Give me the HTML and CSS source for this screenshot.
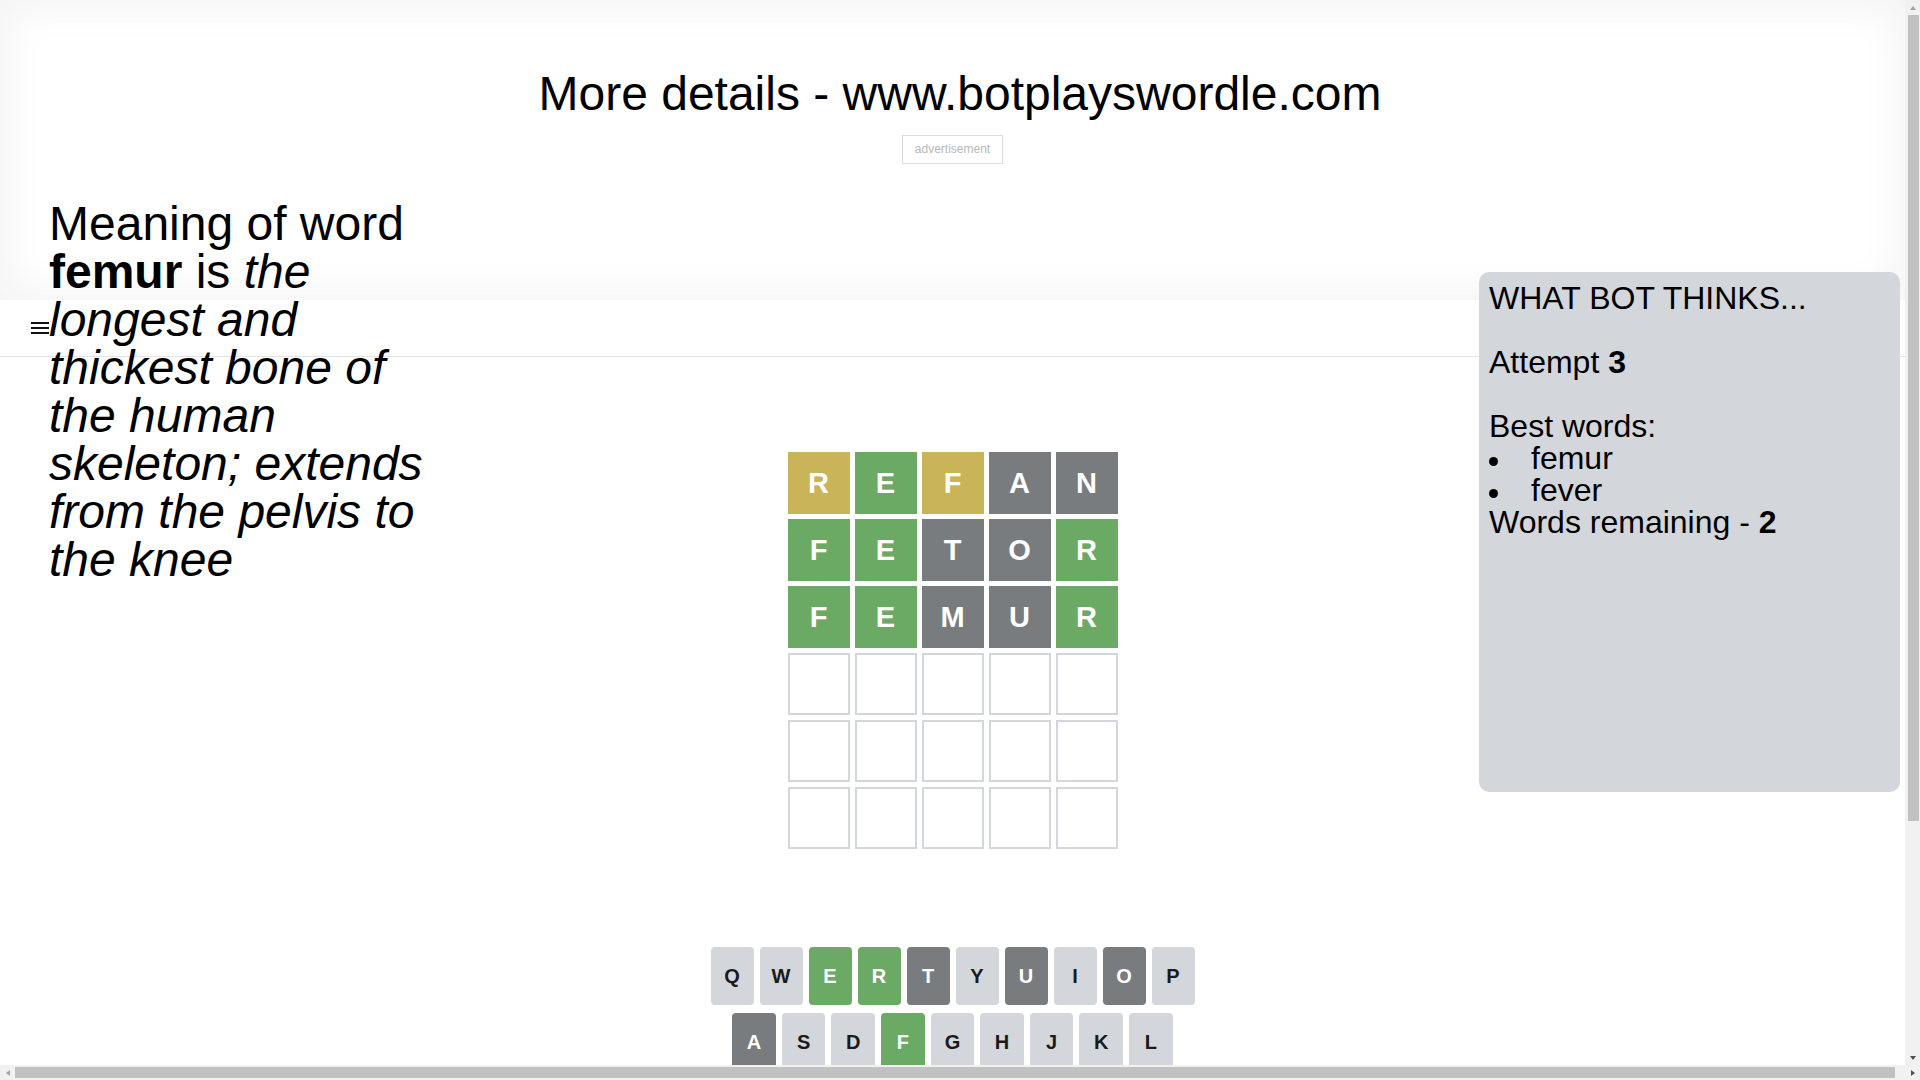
FILE: index.html
```html
<!DOCTYPE html>
<html lang="en">
<head>
<meta charset="utf-8">
<title>Bot plays Wordle</title>
<link rel="stylesheet" href="styles.css">
</head>
<body>
<div class="top">
  <h1 class="site-title">More details - www.botplayswordle.com</h1>
  <div class="ad">advertisement</div>
</div>

<header class="app-header">
  <button class="menu-btn" aria-label="menu">
    <svg width="18" height="12" viewBox="0 0 18 12"><rect x="0" y="0" width="18" height="2" fill="#111"/><rect x="0" y="5" width="18" height="2" fill="#111"/><rect x="0" y="10" width="18" height="2" fill="#111"/></svg>
  </button>
</header>

<main class="game">
  <div class="board">
    <div class="tile present">R</div><div class="tile correct">E</div><div class="tile present">F</div><div class="tile absent">A</div><div class="tile absent">N</div>
    <div class="tile correct">F</div><div class="tile correct">E</div><div class="tile absent">T</div><div class="tile absent">O</div><div class="tile correct">R</div>
    <div class="tile correct">F</div><div class="tile correct">E</div><div class="tile absent">M</div><div class="tile absent">U</div><div class="tile correct">R</div>
    <div class="tile"></div><div class="tile"></div><div class="tile"></div><div class="tile"></div><div class="tile"></div>
    <div class="tile"></div><div class="tile"></div><div class="tile"></div><div class="tile"></div><div class="tile"></div>
    <div class="tile"></div><div class="tile"></div><div class="tile"></div><div class="tile"></div><div class="tile"></div>
  </div>

  <div class="keyboard">
    <div class="kb-row">
      <button class="key">Q</button><button class="key">W</button><button class="key correct">E</button><button class="key correct">R</button><button class="key absent">T</button><button class="key">Y</button><button class="key absent">U</button><button class="key">I</button><button class="key absent">O</button><button class="key">P</button>
    </div>
    <div class="kb-row">
      <div class="spacer"></div>
      <button class="key absent">A</button><button class="key">S</button><button class="key">D</button><button class="key correct">F</button><button class="key">G</button><button class="key">H</button><button class="key">J</button><button class="key">K</button><button class="key">L</button>
      <div class="spacer"></div>
    </div>
    <div class="kb-row">
      <button class="key wide small">ENTER</button><button class="key">Z</button><button class="key">X</button><button class="key">C</button><button class="key">V</button><button class="key">B</button><button class="key absent">N</button><button class="key absent">M</button><button class="key wide" aria-label="backspace"><svg width="24" height="24" viewBox="0 0 24 24"><path fill="#1a1a1b" d="M22 3H7c-.69 0-1.23.35-1.59.88L0 12l5.41 8.11c.36.53.9.89 1.59.89h15c1.1 0 2-.9 2-2V5c0-1.1-.9-2-2-2zm0 16H7.07L2.4 12l4.66-7H22v14zm-11.59-2L14 13.41 17.59 17 19 15.59 15.41 12 19 8.41 17.59 7 14 10.59 10.41 7 9 8.41 12.59 12 9 15.59z"/></svg></button>
    </div>
  </div>
</main>

<aside class="meaning">
  Meaning of word <b>femur</b> is <i>the longest and thickest bone of the human skeleton; extends from the pelvis to the knee</i>
</aside>

<aside class="bot-panel">
  <h2 class="bot-title">WHAT BOT THINKS...</h2>
  <p class="bot-line">Attempt <b>3</b></p>
  <p class="bot-line tight">Best words:</p>
  <ul class="best-words">
    <li>femur</li>
    <li>fever</li>
  </ul>
  <p class="bot-line tight">Words remaining - <b>2</b></p>
</aside>

<div class="vscroll" aria-hidden="true">
  <span class="sb-btn"><span class="tri tri-up"></span></span>
  <span class="sb-thumb-v"></span>
  <span class="sb-btn sb-end"><span class="tri tri-down"></span></span>
</div>
<div class="hscroll" aria-hidden="true">
  <span class="sb-btn"><span class="tri tri-left"></span></span>
  <span class="sb-thumb-h"></span>
  <span class="sb-btn sb-end"><span class="tri tri-right"></span></span>
</div>
</body>
</html>
```

FILE: styles.css
```css
html, body {
  margin: 0;
  padding: 0;
}

body {
  font-family: "Liberation Sans", Arial, sans-serif;
  color: #000;
  background: #fff;
  position: relative;
  margin-right: 15px;
}

/* top promo area */
.top {
  height: 300px;
  box-sizing: border-box;
  padding-top: 66px;
  background: #fff;
  box-shadow: inset 0 0 34px 14px #f6f6f6;
}

.site-title {
  width: 100vw;
  margin: 0;
  font-size: 48px;
  font-weight: normal;
  line-height: normal;
  text-align: center;
  color: #000;
}

.ad {
  width: max-content;
  margin: 14px auto 0;
  padding: 6px 12px;
  border: 1px solid #dcdcdc;
  font-size: 12px;
  line-height: 15px;
  color: #b8b8b8;
}

/* app header */
.app-header {
  height: 56px;
  border-bottom: 1px solid #e4e4e4;
  display: flex;
  align-items: center;
  padding-left: 31px;
}

.menu-btn {
  border: 0;
  background: none;
  padding: 0;
  display: flex;
}

/* game */
.game {
  display: flex;
  flex-direction: column;
  align-items: center;
  padding-top: 95px;
  padding-bottom: 262px;
}

.board {
  display: grid;
  grid-template-columns: repeat(5, 62px);
  grid-auto-rows: 62px;
  gap: 5px;
}

.tile {
  box-sizing: border-box;
  border: 2px solid #d3d6da;
  display: flex;
  align-items: center;
  justify-content: center;
  font-size: 29px;
  font-weight: bold;
  color: #fff;
  text-transform: uppercase;
}

.tile.correct { background: #6aaa64; border-color: #6aaa64; }
.tile.present { background: #c9b458; border-color: #c9b458; }
.tile.absent { background: #787c7e; border-color: #787c7e; }

.keyboard {
  width: 484px;
  margin-top: 98px;
}

.kb-row {
  display: flex;
  margin-bottom: 8px;
}

.kb-row:last-child {
  margin-bottom: 0;
}

.key {
  flex: 1;
  height: 58px;
  margin: 0 6px 0 0;
  padding: 0;
  border: 0;
  border-radius: 4px;
  background: #d3d6da;
  color: #1a1a1b;
  font-family: "Liberation Sans", Arial, sans-serif;
  font-size: 20px;
  font-weight: bold;
  display: flex;
  align-items: center;
  justify-content: center;
}

.key:last-of-type {
  margin-right: 0;
}

.key.wide { flex: 1.5; }
.key.small { font-size: 12px; }

.key.correct { background: #6aaa64; color: #fff; }
.key.absent { background: #787c7e; color: #fff; }

.spacer {
  flex: 0.5;
}

/* overlays */
.meaning {
  position: absolute;
  top: 200px;
  left: 49px;
  width: 400px;
  font-size: 48px;
  line-height: 48px;
}

.bot-panel {
  position: absolute;
  top: 272px;
  right: 5px;
  width: 401px;
  height: 500px;
  padding: 10px;
  background: #d3d6da;
  border-radius: 10px;
  font-size: 32px;
  line-height: 32px;
}

.bot-title {
  margin: 0 0 32px;
  font-size: 32px;
  font-weight: normal;
  line-height: 32px;
}

.bot-line {
  margin: 0 0 32px;
}

.bot-line.tight {
  margin: 0;
}

.best-words {
  list-style: none;
  margin: 0;
  padding: 0;
}

.best-words li::before {
  content: "";
  display: inline-block;
  width: 9px;
  height: 9px;
  border-radius: 50%;
  background: #000;
  margin-right: 33px;
  vertical-align: 3.5px;
}

/* window scrollbars (drawn over the page) */
.vscroll {
  position: fixed;
  top: 0;
  right: 0;
  width: 15px;
  height: calc(100vh - 15px);
  background: #f1f1f1;
  display: flex;
  flex-direction: column;
  align-items: center;
}

.hscroll {
  position: fixed;
  left: 0;
  bottom: 0;
  width: 100vw;
  height: 15px;
  background: #f1f1f1;
  display: flex;
  align-items: center;
}

.sb-btn {
  flex: none;
  width: 15px;
  height: 15px;
  display: flex;
  align-items: center;
  justify-content: center;
}

.sb-end {
  margin-top: auto;
  margin-left: auto;
}

.vscroll .sb-end {
  margin-left: 0;
}

.hscroll .sb-end {
  margin-top: 0;
}

.sb-thumb-v {
  width: 11px;
  height: 806px;
  margin-left: 1px;
  background: #c1c1c1;
}

.sb-thumb-h {
  width: calc(100% - 40px);
  height: 11px;
  background: #c1c1c1;
}

.tri {
  width: 0;
  height: 0;
  border: 0 solid transparent;
}

.tri-up {
  border-width: 0 3.5px 4px;
  border-bottom-color: #a3a3a3;
}

.tri-down {
  border-width: 4px 3.5px 0;
  border-top-color: #505050;
}

.tri-left {
  border-width: 3.5px 4px 3.5px 0;
  border-right-color: #a3a3a3;
}

.tri-right {
  border-width: 3.5px 0 3.5px 4px;
  border-left-color: #505050;
}
```
